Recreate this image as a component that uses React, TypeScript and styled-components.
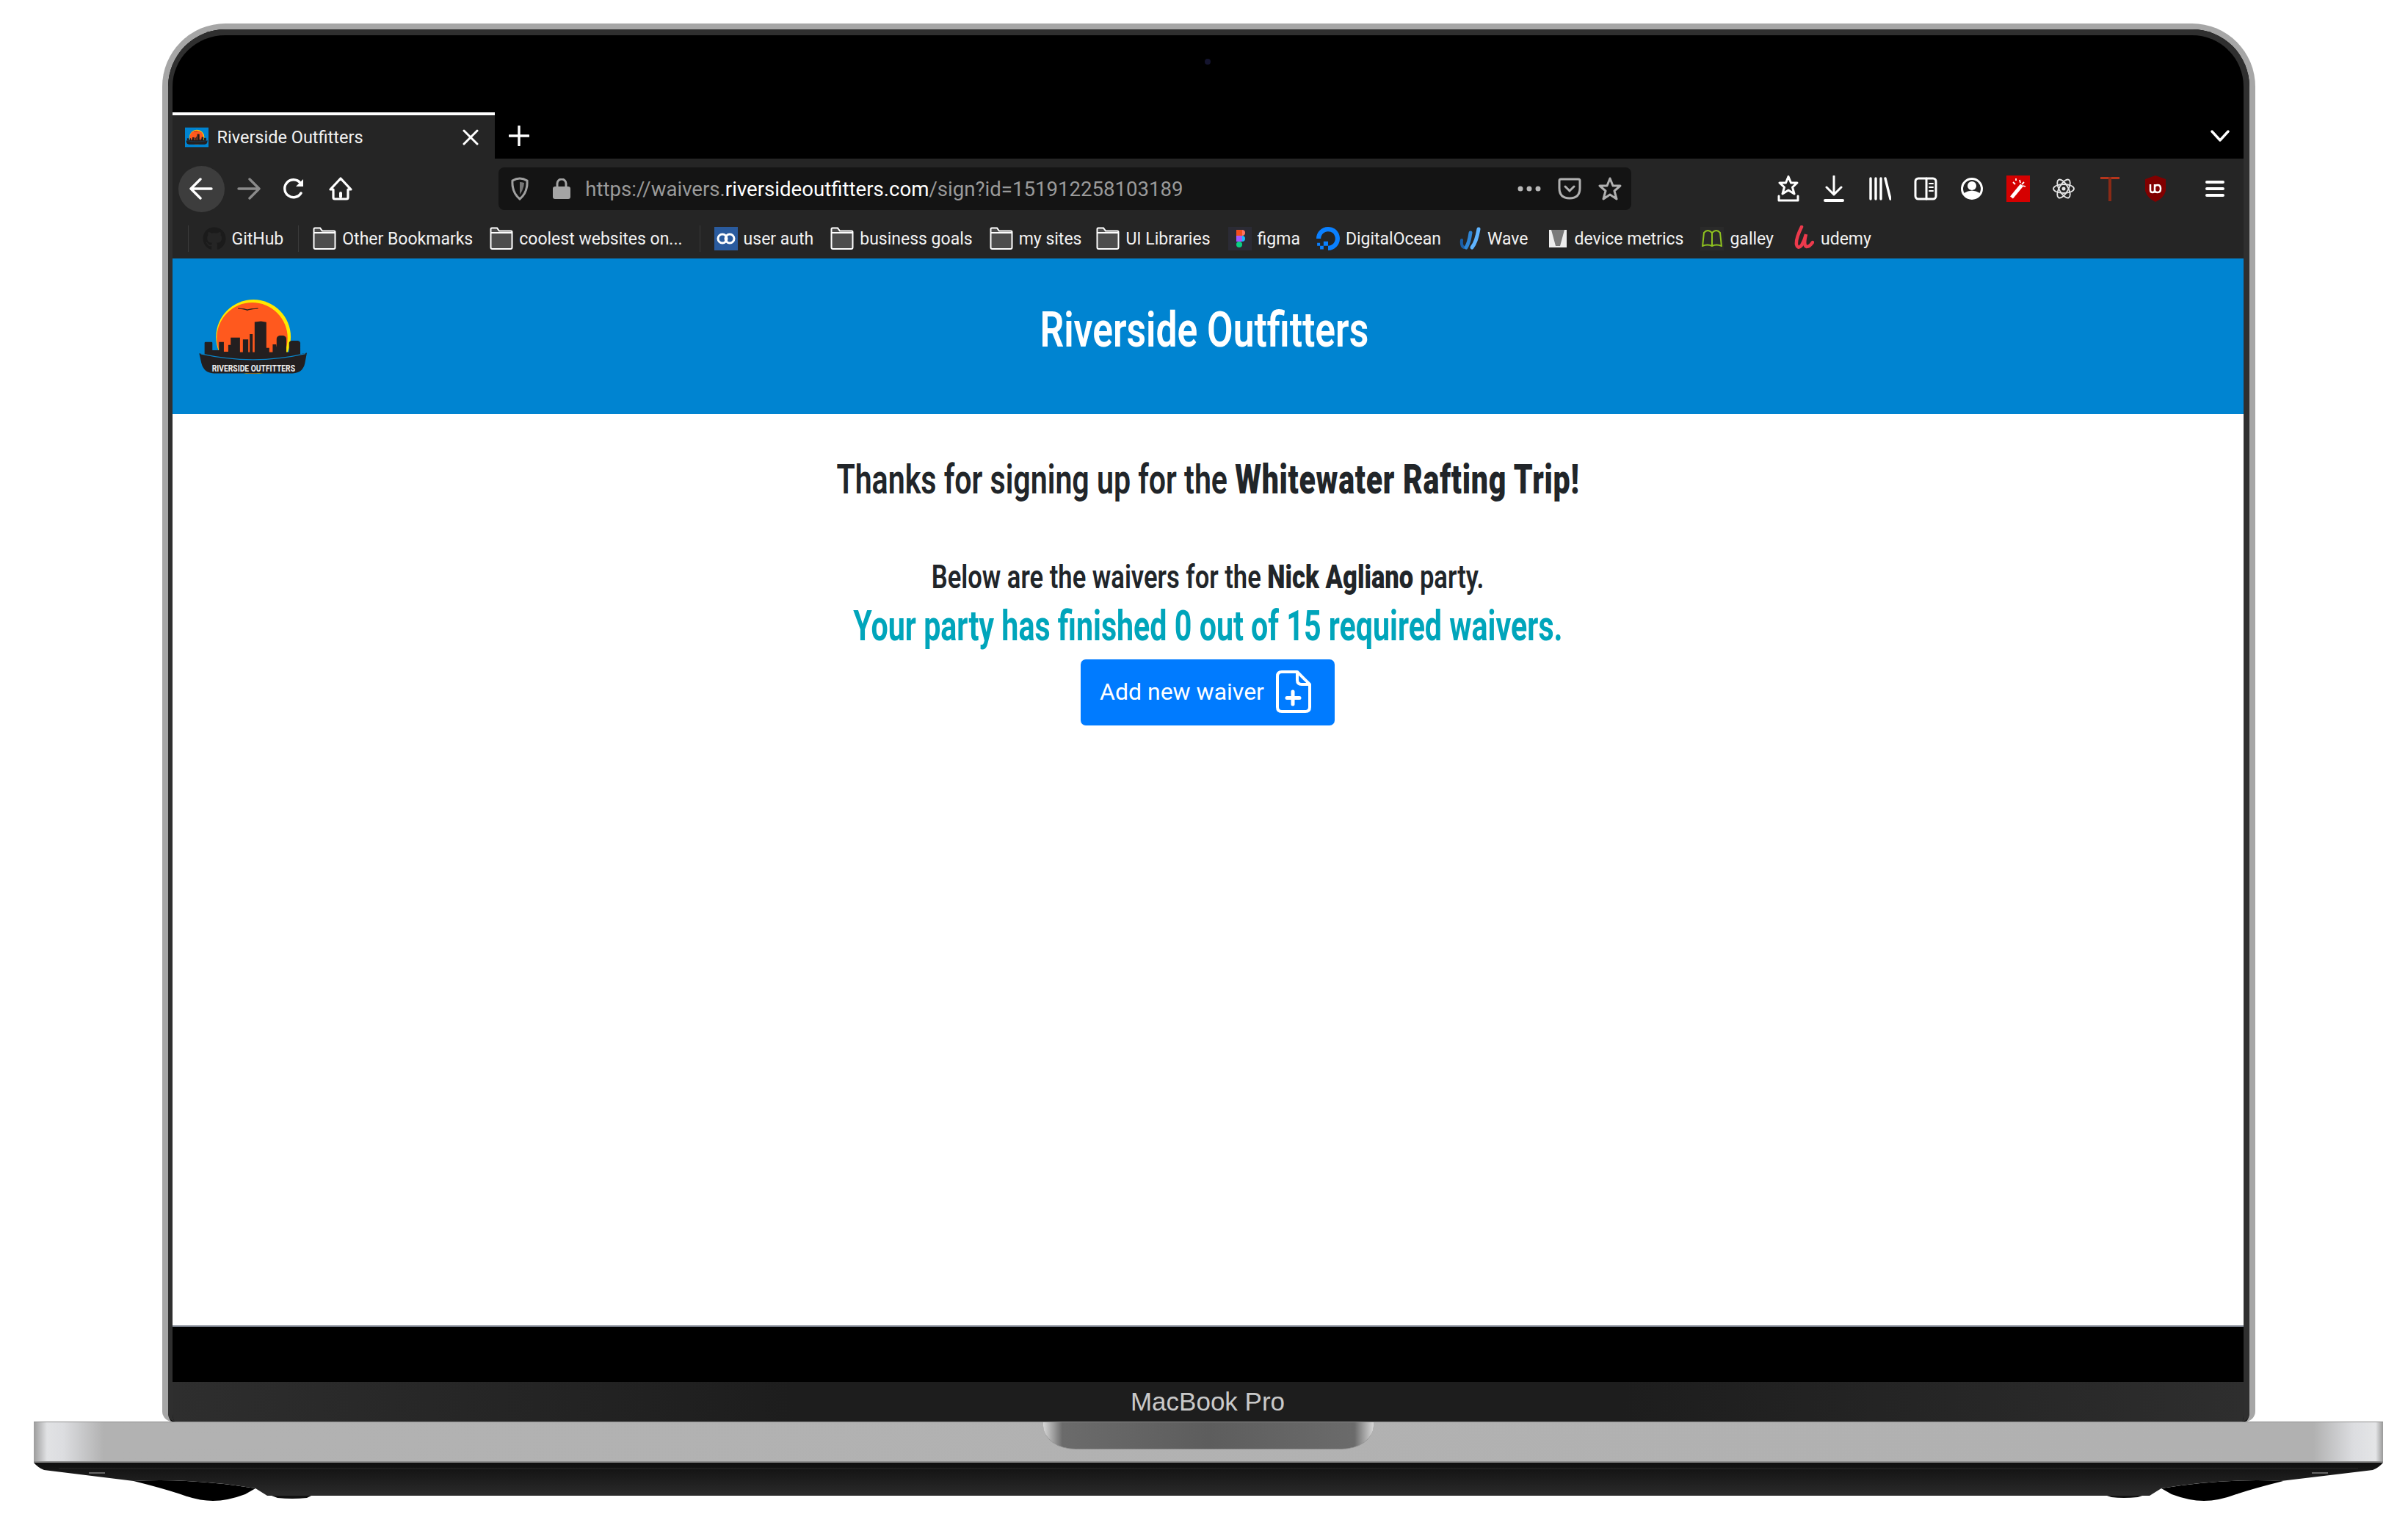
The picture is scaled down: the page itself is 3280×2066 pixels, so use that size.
import * as React from "react";
import styled, { createGlobalStyle } from "styled-components";
import { FaGithub } from "react-icons/fa";
import { SiDigitalocean } from "react-icons/si";

const GlobalStyle = createGlobalStyle`
  html, body {
    margin: 0;
    padding: 0;
    background: #fff;
    overflow: hidden;
  }
  * { box-sizing: border-box; }
`;

const Page = styled.div`
  width: 3280px;
  height: 2066px;
  padding: 32px 0 0 46px;
  background: #fff;
`;

const Device = styled.div`
  width: 3200px;
  display: flex;
  flex-direction: column;
  align-items: center;
`;

const Lid = styled.div`
  width: 2851px;
  height: 1904px;
  border-radius: 86px 86px 14px 14px;
  border: 8px solid #a6a6a6;
  border-bottom: 0;
  background: #000;
`;

const Bezel = styled.div`
  height: 100%;
  border-radius: 78px 78px 10px 10px;
  border: solid #2f2f2f;
  border-width: 8px 8px 0 6px;
  background: #000;
  overflow: hidden;
  display: flex;
  flex-direction: column;
`;

const CameraBar = styled.div`
  height: 105px;
  flex: none;
  display: flex;
  align-items: center;
  justify-content: center;
  padding-bottom: 34px;
`;

const Camera = styled.div`
  width: 8px;
  height: 8px;
  border-radius: 50%;
  background: #14142e;
`;

const TabStrip = styled.div`
  height: 63px;
  flex: none;
  display: flex;
  align-items: center;
  background: #000;
`;

const Tab = styled.div`
  width: 439px;
  height: 63px;
  flex: none;
  display: flex;
  align-items: center;
  padding: 0 22px 0 17px;
  background: #252525;
  border-top: 4px solid #fff;
`;

const TabTitle = styled.span`
  margin-left: 12px;
  flex: 1;
  font: 400 23.5px "Roboto", sans-serif;
  color: #f2f2f2;
  white-space: nowrap;
`;

const NewTab = styled.div`
  width: 66px;
  display: flex;
  justify-content: center;
`;

const TabMenu = styled.div`
  margin-left: auto;
  width: 64px;
  display: flex;
  justify-content: center;
`;

const NavBar = styled.div`
  height: 82px;
  flex: none;
  display: flex;
  align-items: center;
  padding-left: 8px;
  background: #252525;
`;

const BackButton = styled.div`
  width: 63px;
  height: 63px;
  margin-right: 2px;
  flex: none;
  border-radius: 50%;
  background: #3d3d3d;
  display: flex;
  align-items: center;
  justify-content: center;
`;

const Slot = styled.div`
  width: 62.6px;
  height: 50px;
  flex: none;
  display: flex;
  align-items: center;
  justify-content: center;
`;

const UrlBar = styled.div`
  width: 1543px;
  height: 58px;
  margin: 0 182px 0 184px;
  flex: none;
  display: flex;
  align-items: center;
  padding: 0 13px 0 17px;
  border-radius: 8px;
  background: #141414;
`;

const LockWrap = styled.div`
  margin-left: 33px;
  flex: none;
`;

const UrlText = styled.div`
  margin-left: 20px;
  flex: 1;
  font: 400 27.6px "Roboto", sans-serif;
  color: #9a9a9a;
  white-space: nowrap;
`;

const UrlHost = styled.span`
  color: #fff;
`;

const UrlActions = styled.div`
  display: flex;
  align-items: center;
  gap: 23px;
`;

const MenuSlot = styled(Slot)`
  margin-left: 18px;
`;

const BookmarkBar = styled.div`
  height: 54px;
  flex: none;
  display: flex;
  align-items: center;
  padding-left: 21px;
  background: #252525;
`;

const Separator = styled.div`
  width: 1px;
  height: 36px;
  margin-right: 19px;
  flex: none;
  background: #3a3a3a;
`;

const Bookmark = styled.div<{ $after?: number; $gap?: number }>`
  display: flex;
  align-items: center;
  gap: ${(p) => p.$gap ?? 8}px;
  flex: none;
  margin-right: ${(p) => p.$after ?? 24}px;
  font: 400 23px "Roboto", sans-serif;
  color: #f2f2f2;
  white-space: nowrap;
`;

const Screen = styled.div`
  height: 1455px;
  flex: none;
  display: flex;
  flex-direction: column;
  background: #fff;
  border-bottom: 2px solid #7d8490;
`;

const Banner = styled.header`
  height: 212px;
  flex: none;
  display: grid;
  grid-template-columns: 1fr auto 1fr;
  align-items: center;
  background: #0084d1;
`;

const BannerLogo = styled.div`
  margin-left: 36px;
`;

const BannerTitle = styled.h1`
  margin: 0 9px 16px 0;
  font: 600 66px/80px "Roboto", sans-serif;
  color: #fff;
  white-space: nowrap;
  transform: scaleX(0.782);
`;

const Content = styled.main`
  flex: 1;
  display: flex;
  flex-direction: column;
  align-items: center;
  padding-top: 49px;
`;

const Heading = styled.h2`
  margin: 0;
  font: 600 56px/80px "Roboto", sans-serif;
  color: #212529;
  white-space: nowrap;
  transform: scaleX(0.734);

  b { font-weight: 900; letter-spacing: 1px; }
`;

const PartyLine = styled.p`
  margin: 63px 0 0;
  font: 600 45px/60px "Roboto", sans-serif;
  color: #212529;
  white-space: nowrap;
  transform: scaleX(0.768);

  b { font-weight: 900; }
`;

const Progress = styled.p`
  margin: 0;
  font: 700 58px/72px "Roboto", sans-serif;
  color: #00a5bb;
  white-space: nowrap;
  transform: scaleX(0.71);
`;

const AddButton = styled.button`
  width: 346px;
  height: 90px;
  margin-top: 10px;
  padding: 0 6px 2px 0;
  border: 0;
  border-radius: 7px;
  background: #007bff;
  color: #fff;
  font: 400 32px "Roboto", sans-serif;
  display: flex;
  align-items: center;
  justify-content: center;
  gap: 16px;
`;

const BlackBand = styled.div`
  height: 75px;
  flex: none;
  background: #000;
`;

const Chin = styled.div`
  flex: 1;
  display: flex;
  align-items: center;
  justify-content: center;
  background: linear-gradient(90deg, #2e2e2e 0%, #1d1d1d 30%, #1d1d1d 70%, #2e2e2e 100%);
  font: 400 35px "Liberation Sans", Arial, sans-serif;
  color: #c9c9c9;
`;

const Base = styled.div`
  width: 3200px;
  height: 56px;
  flex: none;
  display: flex;
  justify-content: center;
  background: linear-gradient(90deg, #9c9c9c 0, #e1e2e4 18px, #dcdde0 40px, #b2b2b2 95px, #b1b1b1 3105px, #dcdde0 3160px, #e4e5e7 3190px, #999 3200px);
  border-top: 1px solid #8c8c8c;
  border-bottom: 2px solid #8a8a8a;
`;

const Notch = styled.div`
  width: 450px;
  height: 37px;
  flex: none;
  border-radius: 0 0 44px 44px / 0 0 32px 32px;
  background:
    linear-gradient(90deg, #d8d8d8 0, #6b6b6b 26px, #5d5d5d 50%, #6b6b6b 424px, #d8d8d8 450px);
  border-bottom: 1px solid #8f8f8f;
`;

const Underside = styled.svg`
  display: block;
  width: 3200px;
  height: 54px;
  flex: none;
`;

const Icon = styled.svg`
  display: block;
  flex: none;
`;

const White = { fill: "none", stroke: "#fff", strokeWidth: 3, strokeLinecap: "round", strokeLinejoin: "round" } as const;

const Logo = ({ width, height, tiny }: { width: number; height: number; tiny?: boolean }) => (
  <Icon width={width} height={height} viewBox={tiny ? "70 40 480 400" : "90 85 442 303"}>
    {tiny && <rect x="70" y="40" width="480" height="400" fill="#0084d1" />}
    <circle cx="313" cy="238" r="153" fill="#ffe800" />
    <circle cx="308" cy="242" r="145" fill="#ff591e" />
    <rect x="150" y="300" width="330" height="60" fill="#231f20" />
    <path d="M113 262q0-4 4-4h24q4 0 4 4v30h27v-34h20v40h18v-28h10v-30h38v78h12v-70h22v70h6v-92h12v90h8v-140l26-3 22 4v105h12v38h14v-52h14l2 12v-34q0-10 12-14h16q12 4 12 14v75h11v-60q2-8 10-8h26q8 0 10 8v70H113z" fill="#231f20" />
    <path d="M250 121q38 4 38 9 0-5 44-9-30 1-44 5-10-4-38-5z" fill="#231f20" stroke="#231f20" strokeWidth="2" />
    <path d="M91 305q215 50 441-2l-8 42q-8 40-50 42H150q-40-2-50-42z" fill="#231f20" />
    <path d="M98 307q215 48 428-1" fill="none" stroke="#0a84c8" strokeWidth="4" />
    {!tiny && (
      <text transform="translate(143 380) scale(0.815 1)" fontFamily="Roboto, sans-serif" fontWeight="700" fontSize="38" fill="#eee">
        RIVERSIDE OUTFITTERS
      </text>
    )}
  </Icon>
);

const CloseIcon = () => (
  <Icon width="22" height="22" viewBox="0 0 22 22">
    <path d="M2 2l18 18M20 2L2 20" {...White} />
  </Icon>
);
const PlusIcon = () => (
  <Icon width="28" height="28" viewBox="0 0 28 28">
    <path d="M14 1v26M1 14h26" {...White} strokeWidth={3.4} />
  </Icon>
);
const ChevronIcon = () => (
  <Icon width="26" height="16" viewBox="0 0 26 16">
    <path d="M2 2l11 12L24 2" {...White} strokeWidth={3.4} />
  </Icon>
);
const ArrowIcon = ({ flip, color = "#fff" }: { flip?: boolean; color?: string }) => (
  <Icon width="32" height="30" viewBox="0 0 32 30">
    <path d={flip ? "M2 15h27M17 2l13 13-13 13" : "M30 15H3M15 2L2 15l13 13"} {...White} strokeWidth={3.4} stroke={color} />
  </Icon>
);
const ReloadIcon = () => (
  <Icon width="30" height="30" viewBox="0 0 30 30">
    <path d="M24 21a12 12 0 1 1-1-14" {...White} strokeWidth={3.4} />
    <path d="M27 2v10H17z" fill="#fff" />
  </Icon>
);
const HomeIcon = () => (
  <Icon width="32" height="32" viewBox="0 0 32 32">
    <path d="M16 2L2 17h4v11q0 2 2 2h16q2 0 2-2V17h4z" {...White} strokeWidth={3.2} />
    <rect x="14" y="20" width="4" height="9" rx="2" fill="#fff" />
  </Icon>
);
const ShieldIcon = () => (
  <Icon width="24" height="32" viewBox="0 0 24 32">
    <path d="M2 5q5-3 10-3t10 3q1 16-10 25Q1 21 2 5z" fill="none" stroke="#a0a0a0" strokeWidth="3" />
    <path d="M12 7q3 0 6 1-1 10-6 16z" fill="#a0a0a0" opacity=".7" />
  </Icon>
);
const LockIcon = () => (
  <Icon width="24" height="28" viewBox="0 0 24 28">
    <rect y="11" width="24" height="17" rx="3" fill="#a5a5a5" />
    <path d="M6 12V7a6 6 0 0 1 12 0v5" fill="none" stroke="#a5a5a5" strokeWidth="3" />
  </Icon>
);
const DotsIcon = () => (
  <Icon width="32" height="8" viewBox="0 0 32 8">
    <circle cx="4" cy="4" r="3.5" fill="#b8b8b8" />
    <circle cx="16" cy="4" r="3.5" fill="#b8b8b8" />
    <circle cx="28" cy="4" r="3.5" fill="#b8b8b8" />
  </Icon>
);
const PocketIcon = () => (
  <Icon width="32" height="30" viewBox="0 0 32 30">
    <path d="M4 2h24q2 0 2 2v10q0 14-14 14T2 14V4q0-2 2-2z" fill="none" stroke="#b0b0b0" strokeWidth="3" />
    <path d="M10 12l6 6 6-6" fill="none" stroke="#b0b0b0" strokeWidth="3" strokeLinecap="round" />
  </Icon>
);
const StarPath = "M16 2l4 10h10l-8 7 3 11-9-6-9 6 3-11-8-7h10z";
const StarIcon = () => (
  <Icon width="32" height="32" viewBox="0 0 32 32">
    <path d={StarPath} fill="none" stroke="#b0b0b0" strokeWidth="3" strokeLinejoin="round" />
  </Icon>
);
const StarTrayIcon = () => (
  <Icon width="30" height="36" viewBox="0 0 30 36">
    <path d="M15 1.500l3.500 8.500H27l-6.500 6 2.500 9-8-5-8 5 2.500-9L3 10h8.500z" {...White} />
    <path d="M2 28v6h26v-6" {...White} />
  </Icon>
);
const DownloadIcon = () => (
  <Icon width="28" height="36" viewBox="0 0 28 36">
    <path d="M14 1v25M4 16l10 10 10-10" {...White} />
    <path d="M2 34h24" {...White} strokeWidth={4} />
  </Icon>
);
const LibraryIcon = () => (
  <Icon width="30" height="32" viewBox="0 0 30 32">
    <path d="M2 2v28M9 2v28M16 2v28M22 2l7 28" {...White} strokeWidth={3.4} />
  </Icon>
);
const SidebarIcon = () => (
  <Icon width="32" height="32" viewBox="0 0 32 32">
    <rect x="2" y="2" width="28" height="28" rx="4" {...White} />
    <path d="M17 2v28" {...White} />
    <path d="M21 9h5M21 14h5M21 19h5" {...White} strokeWidth={2} />
  </Icon>
);
const AccountIcon = () => (
  <Icon width="30" height="32" viewBox="0 0 30 32">
    <circle cx="15" cy="16" r="13.500" {...White} />
    <circle cx="15" cy="12" r="6" fill="#fff" />
    <path d="M4 22q11-7 22 0-4 8-11 8T4 22z" fill="#fff" />
  </Icon>
);
const WandIcon = () => (
  <Icon width="32" height="36" viewBox="0 0 32 36">
    <rect width="32" height="36" fill="#d50000" />
    <path d="M7 30l14-17" stroke="#fff" strokeWidth="5" />
    <path d="M18 6l1 4M24 9l-3 3M26 15l-4-1M9 9l3 3M13 4v3" stroke="#fff" strokeWidth="1.800" />
  </Icon>
);
const AtomIcon = () => (
  <Icon width="30" height="34" viewBox="0 0 30 34">
    <g fill="none" stroke="#e6e6e6" strokeWidth="1.800">
      <ellipse cx="15" cy="17" rx="14" ry="6" />
      <ellipse cx="15" cy="17" rx="14" ry="6" transform="rotate(60 15 17)" />
      <ellipse cx="15" cy="17" rx="14" ry="6" transform="rotate(120 15 17)" />
    </g>
    <circle cx="15" cy="17" r="2.500" fill="#e6e6e6" />
  </Icon>
);
const RedTIcon = () => (
  <Icon width="26" height="36" viewBox="0 0 26 36">
    <rect y="2" width="26" height="3" fill="#b5351c" />
    <rect x="11" y="2" width="4" height="33" fill="#8a2a16" />
  </Icon>
);
const UblockIcon = () => (
  <Icon width="30" height="36" viewBox="0 0 30 36">
    <path d="M15 0l14 5v16q-3 10-14 15Q4 31 1 21V5z" fill="#800000" />
    <path d="M8 12v8q0 3 3 3t3-3v-8M14 20q0 3 4 3t4-5-4-5-4 3" fill="none" stroke="#fff" strokeWidth="2.500" />
  </Icon>
);
const MenuIcon = () => (
  <Icon width="26" height="24" viewBox="0 0 26 24">
    <path d="M2 3h22M2 12h22M2 21h22" {...White} strokeWidth={4} />
  </Icon>
);
const FolderIcon = () => (
  <Icon width="32" height="32" viewBox="0 0 32 32">
    <path d="M1.500 3q0-1.500 1.500-1.500h7l3 4h16q1.500 0 1.500 1.500v21q0 2-2 2H3.500q-2 0-2-2z" fill="#4d4d4d" stroke="#fff" strokeWidth="2" />
    <path d="M2 8h28" stroke="#fff" strokeWidth="2" />
  </Icon>
);
const AuthIcon = () => (
  <Icon width="32" height="32" viewBox="0 0 32 32">
    <rect width="32" height="32" fill="#2a5b9e" />
    <g fill="none" stroke="#fff" strokeWidth="3">
      <circle cx="11" cy="16" r="6" />
      <circle cx="21" cy="16" r="6" />
    </g>
  </Icon>
);
const FigmaIcon = () => (
  <Icon width="32" height="32" viewBox="0 0 32 32">
    <rect width="32" height="32" fill="#2b2b35" />
    <circle cx="19" cy="8" r="4" fill="#ff7262" />
    <rect x="11" y="4" width="8" height="8" fill="#f24e1e" />
    <circle cx="19" cy="16" r="4" fill="#1abcfe" />
    <rect x="11" y="12" width="8" height="8" fill="#a259ff" />
    <circle cx="15" cy="24" r="4" fill="#0acf83" />
  </Icon>
);
const WaveIcon = () => (
  <Icon width="30" height="32" viewBox="0 0 30 32">
    <path d="M3 18q-1 8 3 10" fill="none" stroke="#1a5fa8" strokeWidth="4" strokeLinecap="round" />
    <path d="M15 8q-2 14-6 20" fill="none" stroke="#2f86d6" strokeWidth="5" strokeLinecap="round" />
    <path d="M26 3q-3 18-9 25" fill="none" stroke="#5fb4ff" strokeWidth="5" strokeLinecap="round" />
  </Icon>
);
const DeviceIcon = () => (
  <Icon width="24" height="28" viewBox="0 0 24 28">
    <rect width="24" height="24" y="2" fill="#eee" />
    <path d="M3 2h18l-6 22H9z" fill="#7a7a7a" />
  </Icon>
);
const GalleyIcon = () => (
  <Icon width="32" height="32" viewBox="0 0 32 32">
    <rect width="32" height="32" fill="#2a2a2a" />
    <path d="M3 27l2-19q5-6 11 0 6-6 11 0l2 19M16 8v18M3 26q7-3 13 0 6-3 13 0" fill="none" stroke="#8fc31f" strokeWidth="2" />
  </Icon>
);
const UdemyIcon = () => (
  <Icon width="28" height="36" viewBox="0 0 28 36">
    <path d="M11 2Q3 18 4 26q2 7 7 1 4-7 6-15-4 16 1 17 4 0 8-6" fill="none" stroke="#ec3a4c" strokeWidth="4.500" strokeLinecap="round" />
  </Icon>
);
const FilePlusIcon = () => (
  <Icon width="48" height="58" viewBox="0 0 48 58">
    <path d="M8 2h21l17 17v31q0 6-6 6H8q-6 0-6-6V8q0-6 6-6z" fill="none" stroke="#fff" strokeWidth="4" strokeLinejoin="round" />
    <path d="M29 3v10q0 6 6 6h10" fill="none" stroke="#fff" strokeWidth="4" />
    <path d="M23 29v17M15 37.500h17" stroke="#fff" strokeWidth="5" strokeLinecap="round" />
  </Icon>
);

export default function App() {
  return (
    <Page>
      <GlobalStyle />
      <Device>
        <Lid>
          <Bezel>
            <CameraBar>
              <Camera />
            </CameraBar>
            <TabStrip>
              <Tab>
                <Logo tiny width={32} height={32} />
                <TabTitle>Riverside Outfitters</TabTitle>
                <CloseIcon />
              </Tab>
              <NewTab>
                <PlusIcon />
              </NewTab>
              <TabMenu>
                <ChevronIcon />
              </TabMenu>
            </TabStrip>
            <NavBar>
              <BackButton>
                <ArrowIcon />
              </BackButton>
              <Slot><ArrowIcon flip color="#8a8a8a" /></Slot>
              <Slot><ReloadIcon /></Slot>
              <Slot><HomeIcon /></Slot>
              <UrlBar>
                <ShieldIcon />
                <LockWrap><LockIcon /></LockWrap>
                <UrlText>
                  https://waivers.<UrlHost>riversideoutfitters.com</UrlHost>/sign?id=151912258103189
                </UrlText>
                <UrlActions>
                  <DotsIcon />
                  <PocketIcon />
                  <StarIcon />
                </UrlActions>
              </UrlBar>
              <Slot><StarTrayIcon /></Slot>
              <Slot><DownloadIcon /></Slot>
              <Slot><LibraryIcon /></Slot>
              <Slot><SidebarIcon /></Slot>
              <Slot><AccountIcon /></Slot>
              <Slot><WandIcon /></Slot>
              <Slot><AtomIcon /></Slot>
              <Slot><RedTIcon /></Slot>
              <Slot><UblockIcon /></Slot>
              <MenuSlot><MenuIcon /></MenuSlot>
            </NavBar>
            <BookmarkBar>
              <Separator />
              <Bookmark $after={20}><FaGithub size={32} color="#1b1b1b" />GitHub</Bookmark>
              <Separator />
              <Bookmark $after={23}><FolderIcon />Other Bookmarks</Bookmark>
              <Bookmark $after={23}><FolderIcon />coolest websites on...</Bookmark>
              <Separator />
              <Bookmark $after={23}><AuthIcon />user auth</Bookmark>
              <Bookmark $after={23}><FolderIcon />business goals</Bookmark>
              <Bookmark $after={20}><FolderIcon />my sites</Bookmark>
              <Bookmark><FolderIcon />UI Libraries</Bookmark>
              <Bookmark $after={22}><FigmaIcon />figma</Bookmark>
              <Bookmark $after={25}><SiDigitalocean size={32} color="#0a80ff" />DigitalOcean</Bookmark>
              <Bookmark $after={28}><WaveIcon />Wave</Bookmark>
              <Bookmark $after={23} $gap={11}><DeviceIcon />device metrics</Bookmark>
              <Bookmark $after={27}><GalleyIcon />galley</Bookmark>
              <Bookmark $gap={9}><UdemyIcon />udemy</Bookmark>
            </BookmarkBar>
            <Screen>
              <Banner>
                <BannerLogo>
                  <Logo width={147} height={101} />
                </BannerLogo>
                <BannerTitle>Riverside Outfitters</BannerTitle>
              </Banner>
              <Content>
                <Heading>
                  Thanks for signing up for the <b>Whitewater Rafting Trip!</b>
                </Heading>
                <PartyLine>
                  Below are the waivers for the <b>Nick Agliano</b> party.
                </PartyLine>
                <Progress>Your party has finished 0 out of 15 required waivers.</Progress>
                <AddButton>
                  Add new waiver
                  <FilePlusIcon />
                </AddButton>
              </Content>
            </Screen>
            <BlackBand />
            <Chin>MacBook Pro</Chin>
          </Bezel>
        </Lid>
        <Base>
          <Notch />
        </Base>
        <Underside viewBox="0 0 3200 54">
          <defs>
            <linearGradient id="under" x1="0" y1="0" x2="0" y2="1">
              <stop offset="0" stopColor="#0f0f0f" />
              <stop offset="1" stopColor="#2b2b2b" />
            </linearGradient>
          </defs>
          <path d="M324 45h54l-6 3q-20 2-40 0zM2824 45h48l-6 2q-20 2-36 0z" fill="#111" />
          <path d="M136 25q80-4 166 10l-14 8q-24 9-44 9-20 0-44-9-24-8-64-18zM3064 25q-80-4-166 10l14 8q24 9 44 9 20 0 44-9 24-8 64-18z" fill="#000" />
          <path d="M0 0h3200q-6 7-14 10L3061 25q-80-4-163 10l-16 10H318l-16-10q-83-14-166-10L14 10Q6 7 0 0z" fill="url(#under)" />
          <path d="M34 8h3132" stroke="#2a2a2a" strokeWidth="1" />
          <path d="M75 14h22M3103 14h22" stroke="#666" strokeWidth="2" />
        </Underside>
      </Device>
    </Page>
  );
}
